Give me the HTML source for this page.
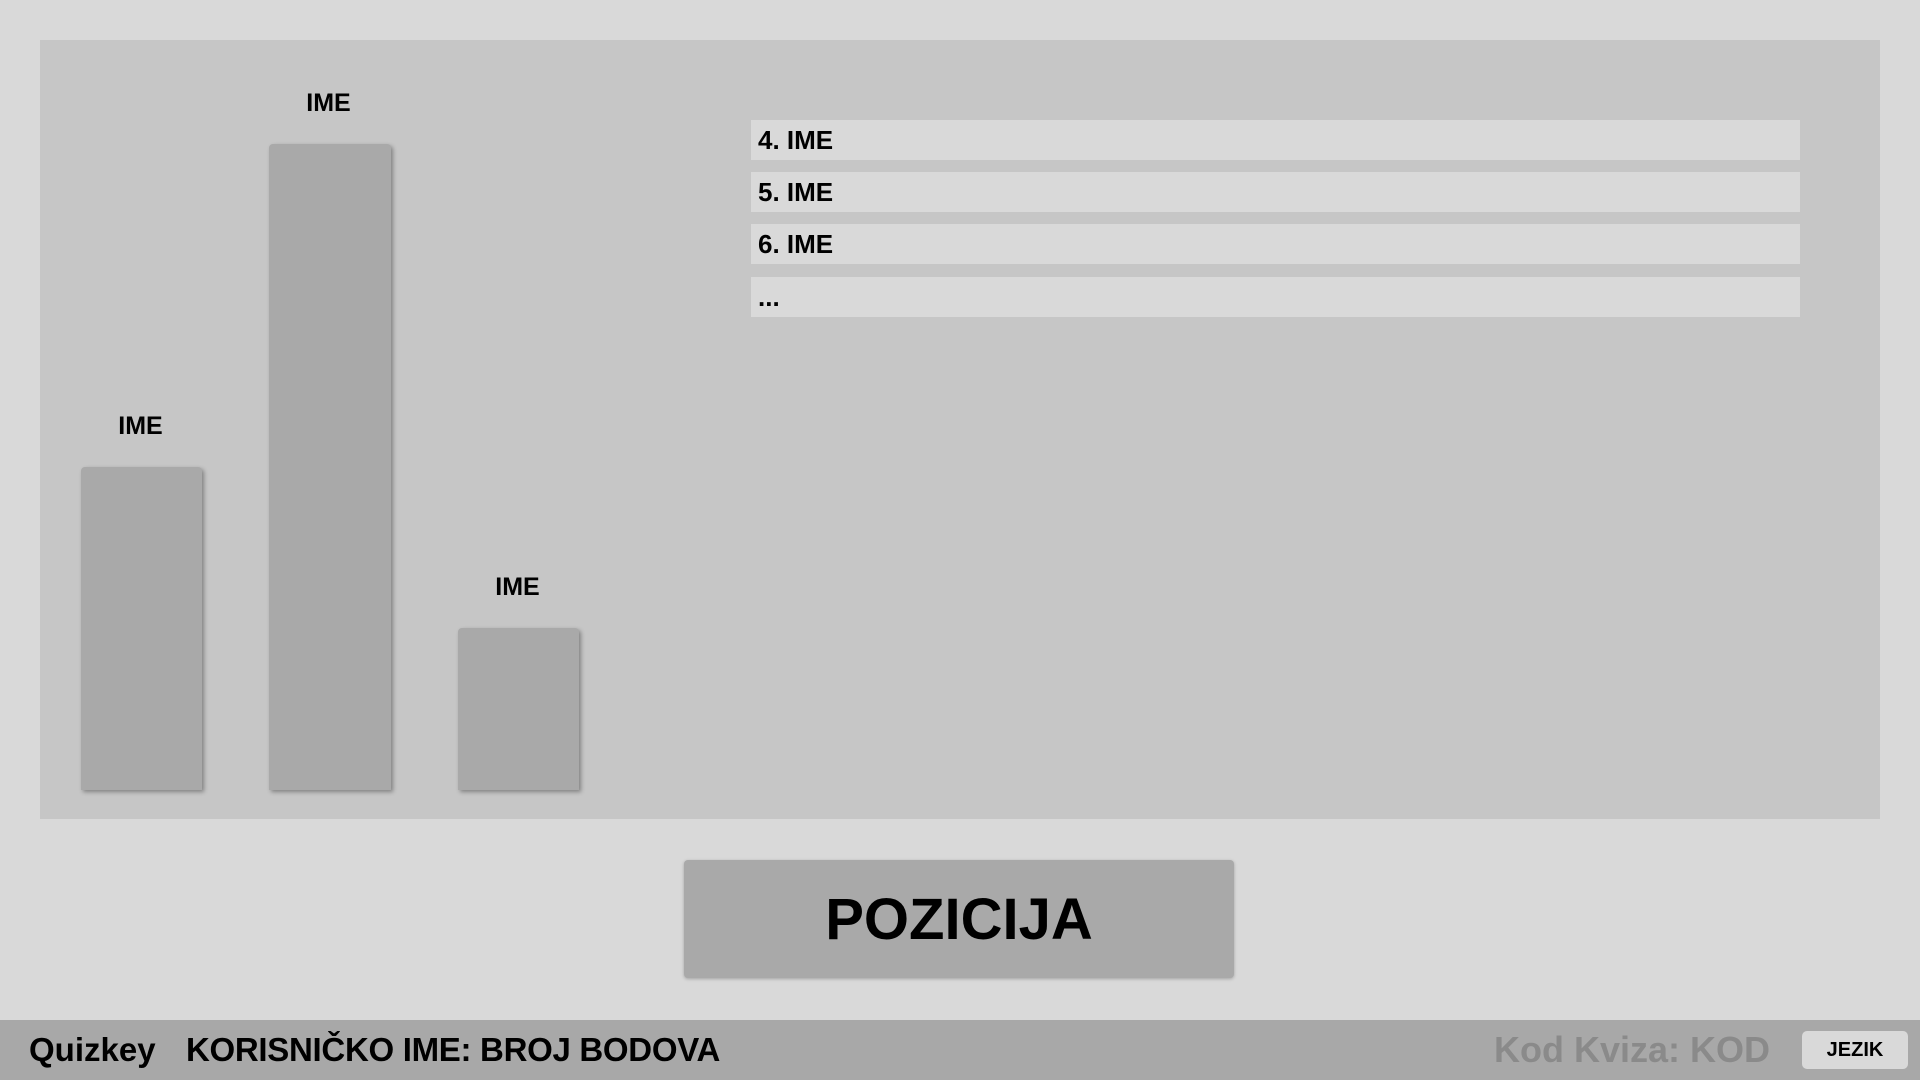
<!DOCTYPE html>
<html><head><meta charset="utf-8"><style>
*{margin:0;padding:0;box-sizing:border-box}
body{width:1920px;height:1080px;background:#d9d9d9;font-family:"Liberation Sans",Arial,sans-serif;font-weight:bold;color:#000;position:relative;overflow:hidden}
.panel{position:absolute;left:40px;top:40px;width:1840px;height:779px;background:#c6c6c6}
.bar{position:absolute;background:#a9a9a9;box-shadow:2px 2px 4px rgba(0,0,0,.35);border-radius:4px 4px 0 0}
.lbl{position:absolute;font-size:25px;text-align:center;width:121px}
.row{position:absolute;left:751px;width:1049px;height:40px;background:#d9d9d9;font-size:26px;line-height:40px;padding-left:7px}
.btn{position:absolute;left:684px;top:860px;width:550px;height:118px;background:#a9a9a9;border-radius:4px;box-shadow:0 1px 3px rgba(0,0,0,.25);font-size:58px;text-align:center;line-height:120px}
.foot{position:absolute;left:0;top:1020px;width:1920px;height:60px;background:#a8a8a8}
.foot span{position:absolute;top:0;line-height:60px;font-size:33px}
.jez{position:absolute;left:1802px;top:11px;width:106px;height:38px;background:#d9d9d9;border-radius:5px;font-size:20px;text-align:center;line-height:38px}
</style></head><body>
<div class="panel"></div>
<div class="bar" style="left:81px;top:467px;width:121px;height:323px"></div>
<div class="bar" style="left:269px;top:144px;width:122px;height:646px"></div>
<div class="bar" style="left:458px;top:628px;width:121px;height:162px"></div>
<div class="lbl" style="left:80px;top:412px">IME</div>
<div class="lbl" style="left:268px;top:89px">IME</div>
<div class="lbl" style="left:457px;top:573px">IME</div>
<div class="row" style="top:120px">4. IME</div>
<div class="row" style="top:172px">5. IME</div>
<div class="row" style="top:224px">6. IME</div>
<div class="row" style="top:277px">...</div>
<div class="btn">POZICIJA</div>
<div class="foot">
<span style="left:29px">Quizkey</span>
<span style="left:186px;letter-spacing:-0.3px">KORISNIČKO IME: BROJ BODOVA</span>
<span style="left:1494px;color:#8a8a8a;font-size:36px">Kod Kviza: KOD</span>
<div class="jez">JEZIK</div>
</div>
</body></html>
